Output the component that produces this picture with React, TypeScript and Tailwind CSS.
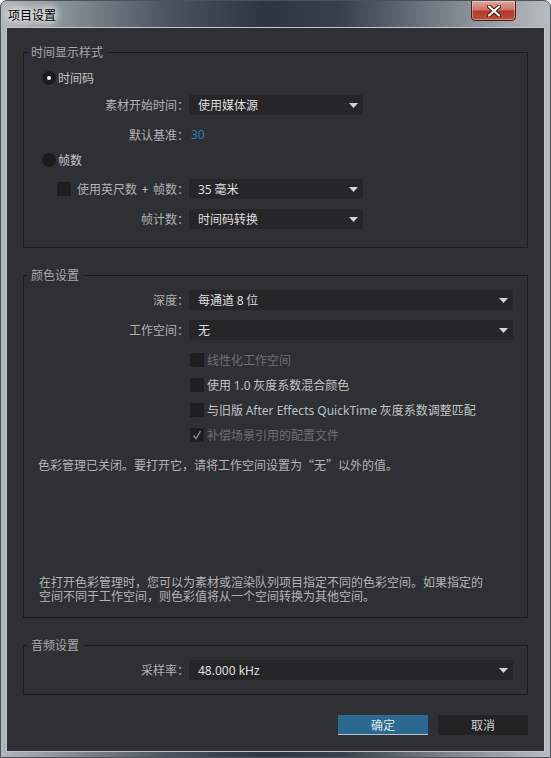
import React from "react";

const Arrow = () => (
  <svg width="9" height="5" viewBox="0 0 9 5" className="shrink-0">
    <path d="M0 0H9L4.5 5Z" fill="#d4d4d4" />
  </svg>
);

const Dropdown = ({ value, className }: { value: React.ReactNode; className: string }) => (
  <div className={`h-5 bg-[#262628] flex items-center justify-between pl-[9px] pr-[5px] text-[#dedede] ${className}`}>
    <span className="whitespace-nowrap">{value}</span>
    <Arrow />
  </div>
);

const Row = ({ label, children, className = "" }: { label: React.ReactNode; children: React.ReactNode; className?: string }) => (
  <div className={`flex items-center h-5 ${className}`}>
    <div className="w-[165px] text-right text-[#b2b2b2] whitespace-nowrap">{label}</div>
    {children}
  </div>
);

const Radio = ({ checked }: { checked?: boolean }) => (
  <div className="w-[14px] h-[14px] rounded-full bg-[#1c1c1d] flex items-center justify-center">
    {checked && <div className="w-[4px] h-[4px] rounded-full bg-[#f0f0f0]" />}
  </div>
);

const Checkbox = ({ checked }: { checked?: boolean }) => (
  <div className="w-[14px] h-[14px] bg-[#1f1f20] flex items-center justify-center shrink-0">
    {checked && (
      <svg width="10" height="10" viewBox="0 0 10 10">
        <path d="M1.5 5.5L4 8.5L8.5 1" stroke="#8a8a8a" strokeWidth="1.4" fill="none" />
      </svg>
    )}
  </div>
);

const latin = "font-['Noto_Sans',sans-serif]";

const CheckRow = ({ checked, dim, children, className = "" }: { checked?: boolean; dim?: boolean; children: React.ReactNode; className?: string }) => (
  <div className={`flex items-center h-5 pl-[166px] ${className}`}>
    <Checkbox checked={checked} />
    <span className={`ml-[3px] whitespace-nowrap ${dim ? "text-[#6f6f6f]" : "text-[#c4c4c4]"}`}>{children}</span>
  </div>
);

export default function App() {
  return (
    <div className="w-[551px] h-[758px] flex flex-col rounded-t-[7px] border border-[#4b525a] bg-[linear-gradient(90deg,#b2b7bc_0%,#8d959c_10%,#4a5561_30%,#2c3642_48%,#36414d_62%,#7d868f_82%,#b8bcc0_100%)] font-['Noto_Sans_CJK_SC',sans-serif] text-[12px] overflow-hidden">
      {/* title bar */}
      <div className="h-[26px] flex justify-between items-start shrink-0">
        <span className="pl-[7px] pt-[7px] leading-[14px] text-black [text-shadow:0_0_6px_#fff,0_0_10px_#fff,0_0_14px_rgba(255,255,255,0.8)]">
          项目设置
        </span>
        <div className="-mt-px mr-[34px] w-[45px] h-[21px] rounded-b-[4px] border border-[#4a1d17] bg-[linear-gradient(180deg,#e0a89c_0%,#cc7566_45%,#b23a2c_55%,#bf4d3b_100%)] flex items-center justify-center shadow-[inset_0_0_0_1px_rgba(255,255,255,0.35)]">
          <svg width="14" height="12" viewBox="0 0 14 12">
            <path d="M2 1.5L12 10.5M12 1.5L2 10.5" stroke="#3a1510" strokeWidth="4" strokeLinecap="round" />
            <path d="M2 1.5L12 10.5M12 1.5L2 10.5" stroke="#ffffff" strokeWidth="2.2" strokeLinecap="round" />
          </svg>
        </div>
      </div>

      {/* client area */}
      <div className="ml-[5px] w-[539px] h-[725px] border border-[#bfc5cb] bg-[#2f3033] flex flex-col shrink-0">
        {/* 时间显示样式 */}
        <fieldset className="mt-[16px] mx-[16px] border border-[#1c1c1d] pb-[18px]">
          <legend className="ml-[3px] px-[4px] leading-4 text-[#a8a8a8]">时间显示样式</legend>
          <div className="flex items-center h-5 mt-[8px] pl-[18px]">
            <Radio checked />
            <span className="ml-[2px] text-[#c4c4c4]">时间码</span>
          </div>
          <Row label="素材开始时间：" className="mt-[7px]">
            <Dropdown value="使用媒体源" className="w-[174px]" />
          </Row>
          <Row label="默认基准：" className="mt-[10px]">
            <span className={`pl-[2px] text-[#2f7db8] ${latin}`}>30</span>
          </Row>
          <div className="flex items-center h-5 mt-[5px] pl-[18px]">
            <Radio />
            <span className="ml-[2px] text-[#c4c4c4]">帧数</span>
          </div>
          <div className="flex items-center h-5 mt-[9px] pl-[33px]">
            <Checkbox />
            <span className="ml-[4px] w-[114px] text-right text-[#b2b2b2] whitespace-nowrap">
              使用英尺数 <span className="px-[2px] text-[#c8c8c8]">+</span> 帧数：
            </span>
            <Dropdown
              value={
                <>
                  <span className={latin}>35</span> 毫米
                </>
              }
              className="w-[174px]"
            />
          </div>
          <Row label="帧计数：" className="mt-[10px]">
            <Dropdown value="时间码转换" className="w-[174px]" />
          </Row>
        </fieldset>

        {/* 颜色设置 */}
        <fieldset className="mt-[19px] mx-[16px] border border-[#1c1c1d] pb-[14px]">
          <legend className="ml-[3px] px-[4px] leading-4 text-[#a8a8a8]">颜色设置</legend>
          <Row label="深度：" className="mt-[7px]">
            <Dropdown
              value={
                <>
                  每通道 <span className={latin}>8</span> 位
                </>
              }
              className="w-[324px]"
            />
          </Row>
          <Row label="工作空间：" className="mt-[10px]">
            <Dropdown value="无" className="w-[324px]" />
          </Row>
          <CheckRow dim className="mt-[10px]">
            线性化工作空间
          </CheckRow>
          <CheckRow className="mt-[5px]">
            使用 <span className={`${latin} text-[#b8c0cc]`}>1.0</span> 灰度系数混合颜色
          </CheckRow>
          <CheckRow className="mt-[5px]">
            与旧版 <span className={`${latin} text-[#b8c0cc]`}>After Effects QuickTime</span> 灰度系数调整匹配
          </CheckRow>
          <CheckRow checked dim className="mt-[5px]">
            补偿场景引用的配置文件
          </CheckRow>
          <p className="mt-[12px] pl-[14px] leading-4 text-[#b4b4b4] whitespace-nowrap">
            色彩管理已关闭。要打开它，请将工作空间设置为“无”以外的值。
          </p>
          <p className="mt-[102px] pl-[15px] leading-[14px] text-[#b4b4b4] whitespace-nowrap">
            在打开色彩管理时，您可以为素材或渲染队列项目指定不同的色彩空间。如果指定的
            <br />
            空间不同于工作空间，则色彩值将从一个空间转换为其他空间。
          </p>
        </fieldset>

        {/* 音频设置 */}
        <fieldset className="mt-[19px] mx-[16px] border border-[#1c1c1d] pb-[14px]">
          <legend className="ml-[3px] px-[4px] leading-4 text-[#a8a8a8]">音频设置</legend>
          <Row label="采样率：" className="mt-[7px]">
            <Dropdown value={<span className={latin}>48.000 kHz</span>} className="w-[324px]" />
          </Row>
        </fieldset>

        <div className="mt-[20px] flex justify-end gap-[10px] pr-[16px]">
          <button className="w-[90px] h-5 bg-[#2b6990] border-b border-[#b8c3cb] text-[#dfe6ea] leading-4">确定</button>
          <button className="w-[90px] h-5 bg-[#232324] text-[#d0d0d0] leading-4">取消</button>
        </div>
      </div>
    </div>
  );
}
